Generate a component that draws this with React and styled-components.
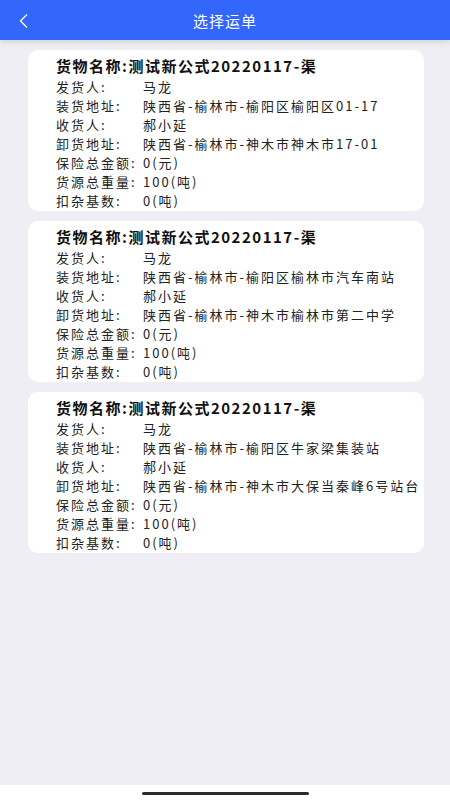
import styled, { createGlobalStyle } from "styled-components";

const GlobalStyle = createGlobalStyle`
  html, body {
    margin: 0;
    padding: 0;
    background: #efeef4;
    font-family: "Noto Sans CJK SC", "Noto Sans", sans-serif;
  }
`;

const Page = styled.div`
  width: 450px;
  height: 800px;
  display: flex;
  flex-direction: column;
  background: #efeef4;
  overflow: hidden;
`;

const Header = styled.div`
  height: 40px;
  flex-shrink: 0;
  background: #3366fb;
  display: flex;
  align-items: center;
  justify-content: center;
  position: relative;
  box-shadow: 0 2px 6px rgba(0, 0, 0, 0.12);
`;

const Back = styled.div`
  position: absolute;
  left: 17px;
  top: 10px;
  width: 14px;
  height: 16px;
`;

const Title = styled.div`
  color: #fff;
  font-size: 15px;
  letter-spacing: 1px;
`;

const List = styled.div`
  flex: 1;
  display: flex;
  flex-direction: column;
  gap: 10px;
  padding: 10px 26px 0 28px;
`;

const Card = styled.div`
  background: #fff;
  border-radius: 10px;
  padding: 5px 0 1px 28px;
  height: 161px;
  box-sizing: border-box;
`;

const CardTitle = styled.div`
  font-size: 15px;
  font-weight: 700;
  letter-spacing: 1.5px;
  color: #111;
  line-height: 22px;
  white-space: nowrap;
`;

const Row = styled.div`
  display: flex;
  font-size: 13px;
  letter-spacing: 2px;
  line-height: 19px;
  color: #222;
  white-space: nowrap;
`;

const Label = styled.span`
  width: 87px;
  flex-shrink: 0;
`;

const Value = styled.span``;

const HomeBar = styled.div`
  height: 15px;
  flex-shrink: 0;
  background: #fff;
  display: flex;
  justify-content: center;
  align-items: center;
`;

const Indicator = styled.div`
  width: 167px;
  height: 3px;
  border-radius: 2px;
  background: #2a2a2a;
  margin-top: 1px;
`;

const orders = [
  { load: "陕西省-榆林市-榆阳区榆阳区01-17", unload: "陕西省-榆林市-神木市神木市17-01" },
  { load: "陕西省-榆林市-榆阳区榆林市汽车南站", unload: "陕西省-榆林市-神木市榆林市第二中学" },
  { load: "陕西省-榆林市-榆阳区牛家梁集装站", unload: "陕西省-榆林市-神木市大保当秦峰6号站台" },
];

export default function App() {
  return (
    <Page>
      <GlobalStyle />
      <Header>
        <Back>
          <svg width="14" height="16" viewBox="0 0 14 16">
            <path d="M10 1.5 L3.5 8 L10 14.5" fill="none" stroke="#fff" strokeWidth="1.3" />
          </svg>
        </Back>
        <Title>选择运单</Title>
      </Header>
      <List>
        {orders.map((o, i) => (
          <Card key={i}>
            <CardTitle>货物名称:测试新公式20220117-渠</CardTitle>
            <Row><Label>发货人:</Label><Value>马龙</Value></Row>
            <Row><Label>装货地址:</Label><Value>{o.load}</Value></Row>
            <Row><Label>收货人:</Label><Value>郝小延</Value></Row>
            <Row><Label>卸货地址:</Label><Value>{o.unload}</Value></Row>
            <Row><Label>保险总金额:</Label><Value>0(元)</Value></Row>
            <Row><Label>货源总重量:</Label><Value>100(吨)</Value></Row>
            <Row><Label>扣杂基数:</Label><Value>0(吨)</Value></Row>
          </Card>
        ))}
      </List>
      <HomeBar>
        <Indicator />
      </HomeBar>
    </Page>
  );
}
